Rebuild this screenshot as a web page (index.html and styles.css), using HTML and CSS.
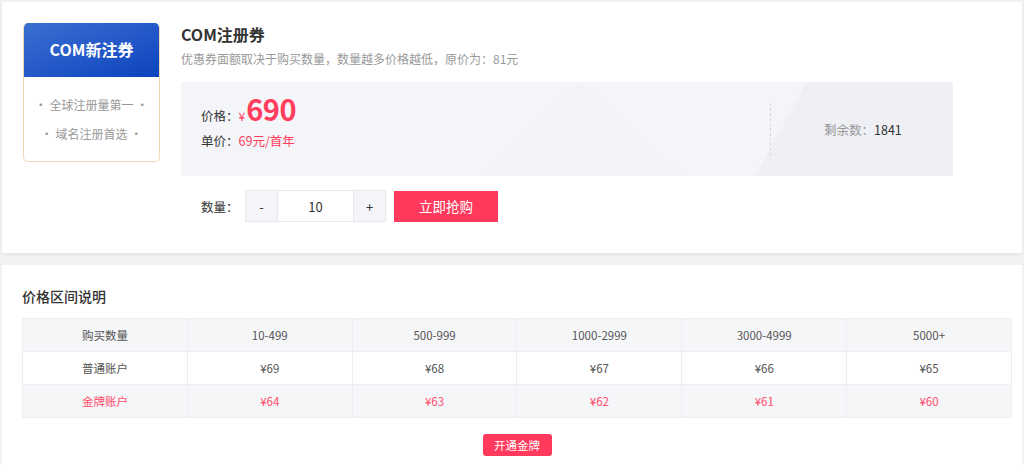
FILE: index.html
```html
<!DOCTYPE html>
<html lang="zh-CN">
  <head>
    <meta charset="UTF-8" />
    <meta name="viewport" content="width=device-width, initial-scale=1.0" />
    <title>COM注册券</title>
    <link rel="stylesheet" href="styles.css">
  </head>
  <body>
    <!-- 상품 정보 -->
    <section class="panel product">
      <div class="coupon">
        <div class="coupon-head">COM新注券</div>
        <div class="coupon-body">
          <p>• 全球注册量第一 •</p>
          <p>• 域名注册首选 •</p>
        </div>
      </div>
      <div class="info">
        <h1 class="title">COM注册券</h1>
        <p class="desc">优惠券面额取决于购买数量，数量越多价格越低，原价为：81元</p>
        <div class="price-box">
          <div class="price-left">
            <div class="price-row">
              <span class="label">价格：</span><span class="yen">¥</span><span class="big">690</span>
            </div>
            <div class="unit-row">
              <span class="label">单价：</span><span class="red">69元/首年</span>
            </div>
          </div>
          <div class="divider"></div>
          <div class="stock"><span class="muted">剩余数：</span>1841</div>
        </div>
        <div class="buy-row">
          <span class="label">数量：</span>
          <div class="counter">
            <button type="button" class="step">-</button>
            <input class="qty" type="text" value="10" />
            <button type="button" class="step">+</button>
          </div>
          <button type="button" class="btn-buy">立即抢购</button>
        </div>
      </div>
    </section>

    <!-- 가격 구간 -->
    <section class="panel range">
      <h2 class="sub-title">价格区间说明</h2>
      <table class="price-table">
        <tr class="gray">
          <td>购买数量</td><td>10-499</td><td>500-999</td><td>1000-2999</td><td>3000-4999</td><td>5000+</td>
        </tr>
        <tr>
          <td>普通账户</td><td>¥69</td><td>¥68</td><td>¥67</td><td>¥66</td><td>¥65</td>
        </tr>
        <tr class="gray gold">
          <td>金牌账户</td><td>¥64</td><td>¥63</td><td>¥62</td><td>¥61</td><td>¥60</td>
        </tr>
      </table>
      <div class="open-wrap">
        <button type="button" class="btn-gold">开通金牌</button>
      </div>
    </section>
  </body>
</html>
```

FILE: styles.css
```css
* {
  padding: 0;
  margin: 0;
  box-sizing: border-box;
}
body {
  background: #f2f2f2;
  font-family: "Noto Sans CJK SC", "Noto Sans", sans-serif;
  color: #333;
}
button {
  border: none;
  background-color: #fff;
  padding: 0;
  margin: 0;
  cursor: pointer;
  font-family: inherit;
}
.panel {
  background: #fff;
  margin: 2px 2px 0;
}

/* top */
.product {
  height: 251px;
  padding: 21px;
  display: flex;
  gap: 21px;
  box-shadow: 0 2px 3px rgba(0, 0, 0, 0.06);
}
.coupon {
  width: 137px;
  height: 139px;
  border: 1px solid #ecdab6;
  border-top: none;
  border-radius: 5px;
  overflow: hidden;
  flex-shrink: 0;
}
.coupon-head {
  height: 54px;
  margin: 0 -1px;
  background: linear-gradient(160deg, #3a6fd0 0%, #2357c8 55%, #0b43bd 100%);
  color: #fff;
  font-size: 16px;
  font-weight: bold;
  display: flex;
  align-items: center;
  justify-content: center;
  padding-bottom: 2px;
}
.coupon-body {
  padding-top: 13px;
  text-align: center;
  font-size: 12px;
  color: #999;
}
.coupon-body p {
  line-height: 29px;
}

.info {
  flex: 1;
}
.title {
  font-size: 16px;
  line-height: 22px;
  font-weight: bold;
  color: #333;
}
.desc {
  margin-top: 4px;
  font-size: 12px;
  line-height: 20px;
  color: #999;
}
.price-box {
  position: relative;
  overflow: hidden;
  margin-top: 13px;
  width: 772px;
  height: 94px;
  background: #f4f5f8;
  display: flex;
  align-items: center;
  padding-left: 20px;
}
.price-box::before {
  content: "";
  position: absolute;
  left: 300px;
  top: 0;
  width: 200px;
  height: 94px;
  background: #f0f2f6;
  clip-path: polygon(50% 0, 100% 100%, 0 100%);
  opacity: 0.6;
}
.price-box::after {
  content: "";
  position: absolute;
  left: 574px;
  top: 0;
  width: 198px;
  height: 94px;
  background: #eef0f5;
  clip-path: polygon(52px 0, 100% 0, 100% 100%, 0 100%);
}
.price-left,
.divider,
.stock {
  position: relative;
  z-index: 1;
}
.price-left {
  width: 569px;
  padding-bottom: 17px;
}
.label {
  font-size: 12.5px;
  color: #333;
}
.price-row {
  height: 34px;
  display: flex;
  align-items: baseline;
}
.yen {
  font-size: 12px;
  color: #ff3d5c;
  margin-right: 1px;
}
.big {
  font-size: 29px;
  line-height: 34px;
  font-weight: bold;
  color: #ff3d5c;
  letter-spacing: -0.5px;
}
.unit-row {
  margin-top: 4px;
  line-height: 20px;
}
.red {
  font-size: 12.5px;
  color: #ff3d5c;
}
.divider {
  height: 53px;
  border-left: 1px dashed #d6d8dc;
}
.stock {
  margin-left: 53px;
  font-size: 12.5px;
  color: #333;
}
.muted {
  color: #999;
}

.buy-row {
  margin-top: 14px;
  padding-left: 20px;
  display: flex;
  align-items: center;
  height: 32px;
}
.buy-row .label {
  width: 44px;
}
.counter {
  display: flex;
  height: 32px;
  border: 1px solid #e8e9ec;
}
.step {
  width: 31px;
  background: #f4f5f8;
  font-size: 13px;
  color: #333;
}
.qty {
  width: 77px;
  border: none;
  border-left: 1px solid #e8e9ec;
  border-right: 1px solid #e8e9ec;
  text-align: center;
  font-size: 13px;
  font-family: inherit;
  color: #333;
  outline: none;
}
.btn-buy {
  margin-left: 8px;
  width: 104px;
  height: 31px;
  background: #ff3a5c;
  color: #fff;
  font-size: 13.5px;
}

/* bottom */
.range {
  margin-top: 12px;
  padding: 20px 20px 30px;
  min-height: 200px;
}
.sub-title {
  font-size: 14px;
  line-height: 22px;
  font-weight: 500;
  color: #333;
}
.price-table {
  margin-top: 11px;
  width: 990px;
  border-collapse: collapse;
  table-layout: fixed;
  font-size: 11.5px;
  color: #555;
}
.price-table td {
  height: 33px;
  border: 1px solid #eceef1;
  text-align: center;
}
.price-table tr.gray {
  background: #f5f6f8;
}
.price-table tr.gold td {
  color: #ff4d6a;
}
.open-wrap {
  width: 990px;
  margin-top: 13px;
  text-align: center;
}
.btn-gold {
  width: 69px;
  height: 22px;
  border-radius: 3px;
  background: #ff3a5c;
  color: #fff;
  font-size: 11.5px;
}
```
